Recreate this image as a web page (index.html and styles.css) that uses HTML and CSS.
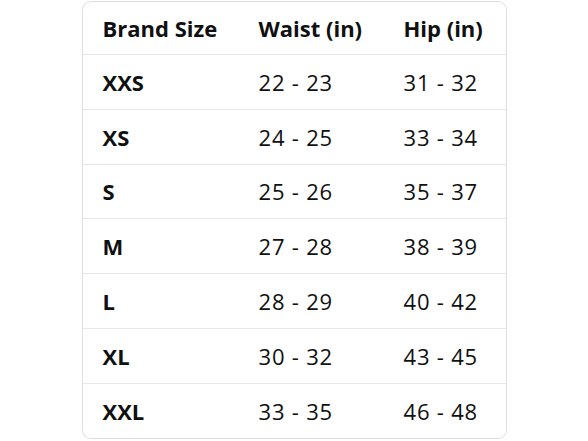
FILE: index.html
```html
<!DOCTYPE html>
<html>
<head>
<meta charset="utf-8">
<link rel="stylesheet" href="styles.css">
</head>
<body>
<div class="page">
  <div class="chart">
    <div class="row head"><div class="cell">Brand Size</div><div class="cell">Waist (in)</div><div class="cell">Hip (in)</div></div>
    <div class="row"><div class="cell size">XXS</div><div class="cell num">22 - 23</div><div class="cell num">31 - 32</div></div>
    <div class="row"><div class="cell size">XS</div><div class="cell num">24 - 25</div><div class="cell num">33 - 34</div></div>
    <div class="row"><div class="cell size">S</div><div class="cell num">25 - 26</div><div class="cell num">35 - 37</div></div>
    <div class="row"><div class="cell size">M</div><div class="cell num">27 - 28</div><div class="cell num">38 - 39</div></div>
    <div class="row"><div class="cell size">L</div><div class="cell num">28 - 29</div><div class="cell num">40 - 42</div></div>
    <div class="row"><div class="cell size">XL</div><div class="cell num">30 - 32</div><div class="cell num">43 - 45</div></div>
    <div class="row last"><div class="cell size">XXL</div><div class="cell num">33 - 35</div><div class="cell num">46 - 48</div></div>
  </div>
</div>
</body>
</html>
```
FILE: styles.css
```css
html, body {
  margin: 0;
  padding: 0;
  background: #ffffff;
}
.page {
  display: flex;
  justify-content: center;
  padding-top: 1px;
}
.chart {
  width: 423px;
  border: 1px solid #dcdfe0;
  border-radius: 9px;
  overflow: hidden;
  font-family: "Open Sans", "Noto Sans", sans-serif;
  color: #0f1111;
  font-size: 22px;
}
.row {
  display: grid;
  grid-template-columns: 156px 145px 1fr;
  height: 53.8px;
  align-items: center;
  border-bottom: 1px solid #e7e9e9;
}
.row.head {
  height: 52px;
}
.row.last {
  border-bottom: none;
}
.cell {
  padding-left: 20px;
  white-space: nowrap;
}
.cell.num {
  letter-spacing: 0.8px;
}
.head .cell,
.cell.size {
  font-weight: 700;
}
```
